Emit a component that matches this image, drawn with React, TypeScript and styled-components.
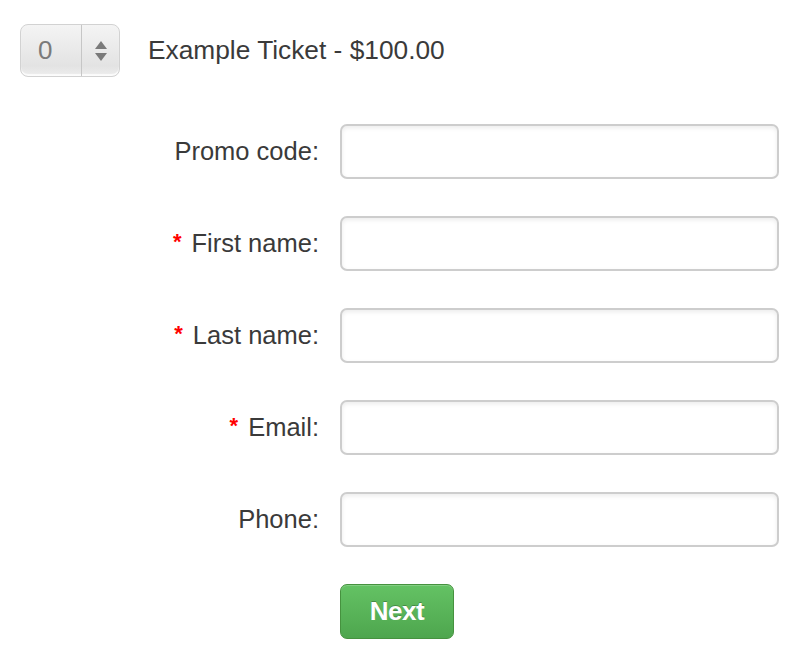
import React, {FC} from 'react';
import styled, {createGlobalStyle} from 'styled-components';

const GlobalStyle = createGlobalStyle`
	body {
		margin: 0;
		background: #fff;
		font-family: 'Liberation Sans', Arial, Helvetica, sans-serif;
		color: #333;
	}
`;

const StyledPage = styled.div`
	padding: 24px 0 0 20px;
`;

const StyledTicketRow = styled.div`
	display: flex;
	align-items: center;
	gap: 28px;
`;

const StyledQuantity = styled.div`
	display: flex;
	width: 100px;
	height: 53px;
	box-sizing: border-box;
	border: 1px solid #d2d2d2;
	border-radius: 8px;
	background: linear-gradient(#f4f4f4 0%, #e3e3e3 80%, #ededed 100%);
	box-shadow: inset 0 -2px 1px rgba(255, 255, 255, 0.8);
`;

const StyledQuantityValue = styled.div`
	display: flex;
	align-items: center;
	width: 61px;
	box-sizing: border-box;
	padding-left: 17px;
	border-right: 1px solid #c6c6c6;
	font-size: 26px;
	color: #7a7a7a;
`;

const StyledQuantityArrows = styled.div`
	flex: 1;
	display: flex;
	align-items: center;
	justify-content: center;
`;

const StyledTicketName = styled.div`
	font-size: 26.3px;
	color: #3a3a3a;
`;

const StyledForm = styled.form`
	display: grid;
	grid-template-columns: 300px 439px;
	column-gap: 20px;
	row-gap: 37px;
	margin-top: 47px;
	align-items: center;
`;

const StyledLabel = styled.label`
	text-align: right;
	font-size: 25.5px;
	color: #3a3a3a;
	padding-right: 1px;
`;

const StyledRequired = styled.span`
	color: #f00;
	font-weight: bold;
	font-size: 22px;
	margin-right: 10px;
	position: relative;
	top: -3px;
`;

const StyledInput = styled.input`
	box-sizing: border-box;
	width: 439px;
	height: 55px;
	border: 2px solid #cdcdcd;
	border-radius: 7px;
	background: #fff;
	box-shadow: inset 0 2px 4px rgba(0, 0, 0, 0.08);
	font-size: 26px;
	padding: 0 12px;
	outline: none;
`;

const StyledButton = styled.button`
	grid-column: 2;
	justify-self: start;
	width: 114px;
	height: 55px;
	border: 1px solid #46923f;
	border-radius: 7px;
	background: linear-gradient(#64c264, #4ea64e);
	box-shadow: inset 0 1px 0 rgba(255, 255, 255, 0.2);
	color: #fff;
	font-family: inherit;
	font-size: 26px;
	font-weight: bold;
	text-shadow: 0 -1px 0 rgba(0, 0, 0, 0.25);
	letter-spacing: -0.5px;
`;

interface IField {
	label: string;
	required?: boolean;
}

const fields: IField[] = [
	{label: 'Promo code:'},
	{label: 'First name:', required: true},
	{label: 'Last name:', required: true},
	{label: 'Email:', required: true},
	{label: 'Phone:'}
];

const Arrows: FC = () => (
	<svg width='14' height='24' viewBox='0 0 14 24'>
		<polygon points='7,2 13,10 1,10' fill='#7a7a7a' />
		<polygon points='1,14 13,14 7,22' fill='#7a7a7a' />
	</svg>
);

const App: FC = () => (
	<StyledPage>
		<GlobalStyle />
		<StyledTicketRow>
			<StyledQuantity>
				<StyledQuantityValue>0</StyledQuantityValue>
				<StyledQuantityArrows>
					<Arrows />
				</StyledQuantityArrows>
			</StyledQuantity>
			<StyledTicketName>Example Ticket - $100.00</StyledTicketName>
		</StyledTicketRow>
		<StyledForm onSubmit={(e) => e.preventDefault()}>
			{fields.map((field) => (
				<React.Fragment key={field.label}>
					<StyledLabel>
						{field.required ? <StyledRequired>*</StyledRequired> : null}
						{field.label}
					</StyledLabel>
					<StyledInput type='text' />
				</React.Fragment>
			))}
			<StyledButton type='submit'>Next</StyledButton>
		</StyledForm>
	</StyledPage>
);

export default App;
